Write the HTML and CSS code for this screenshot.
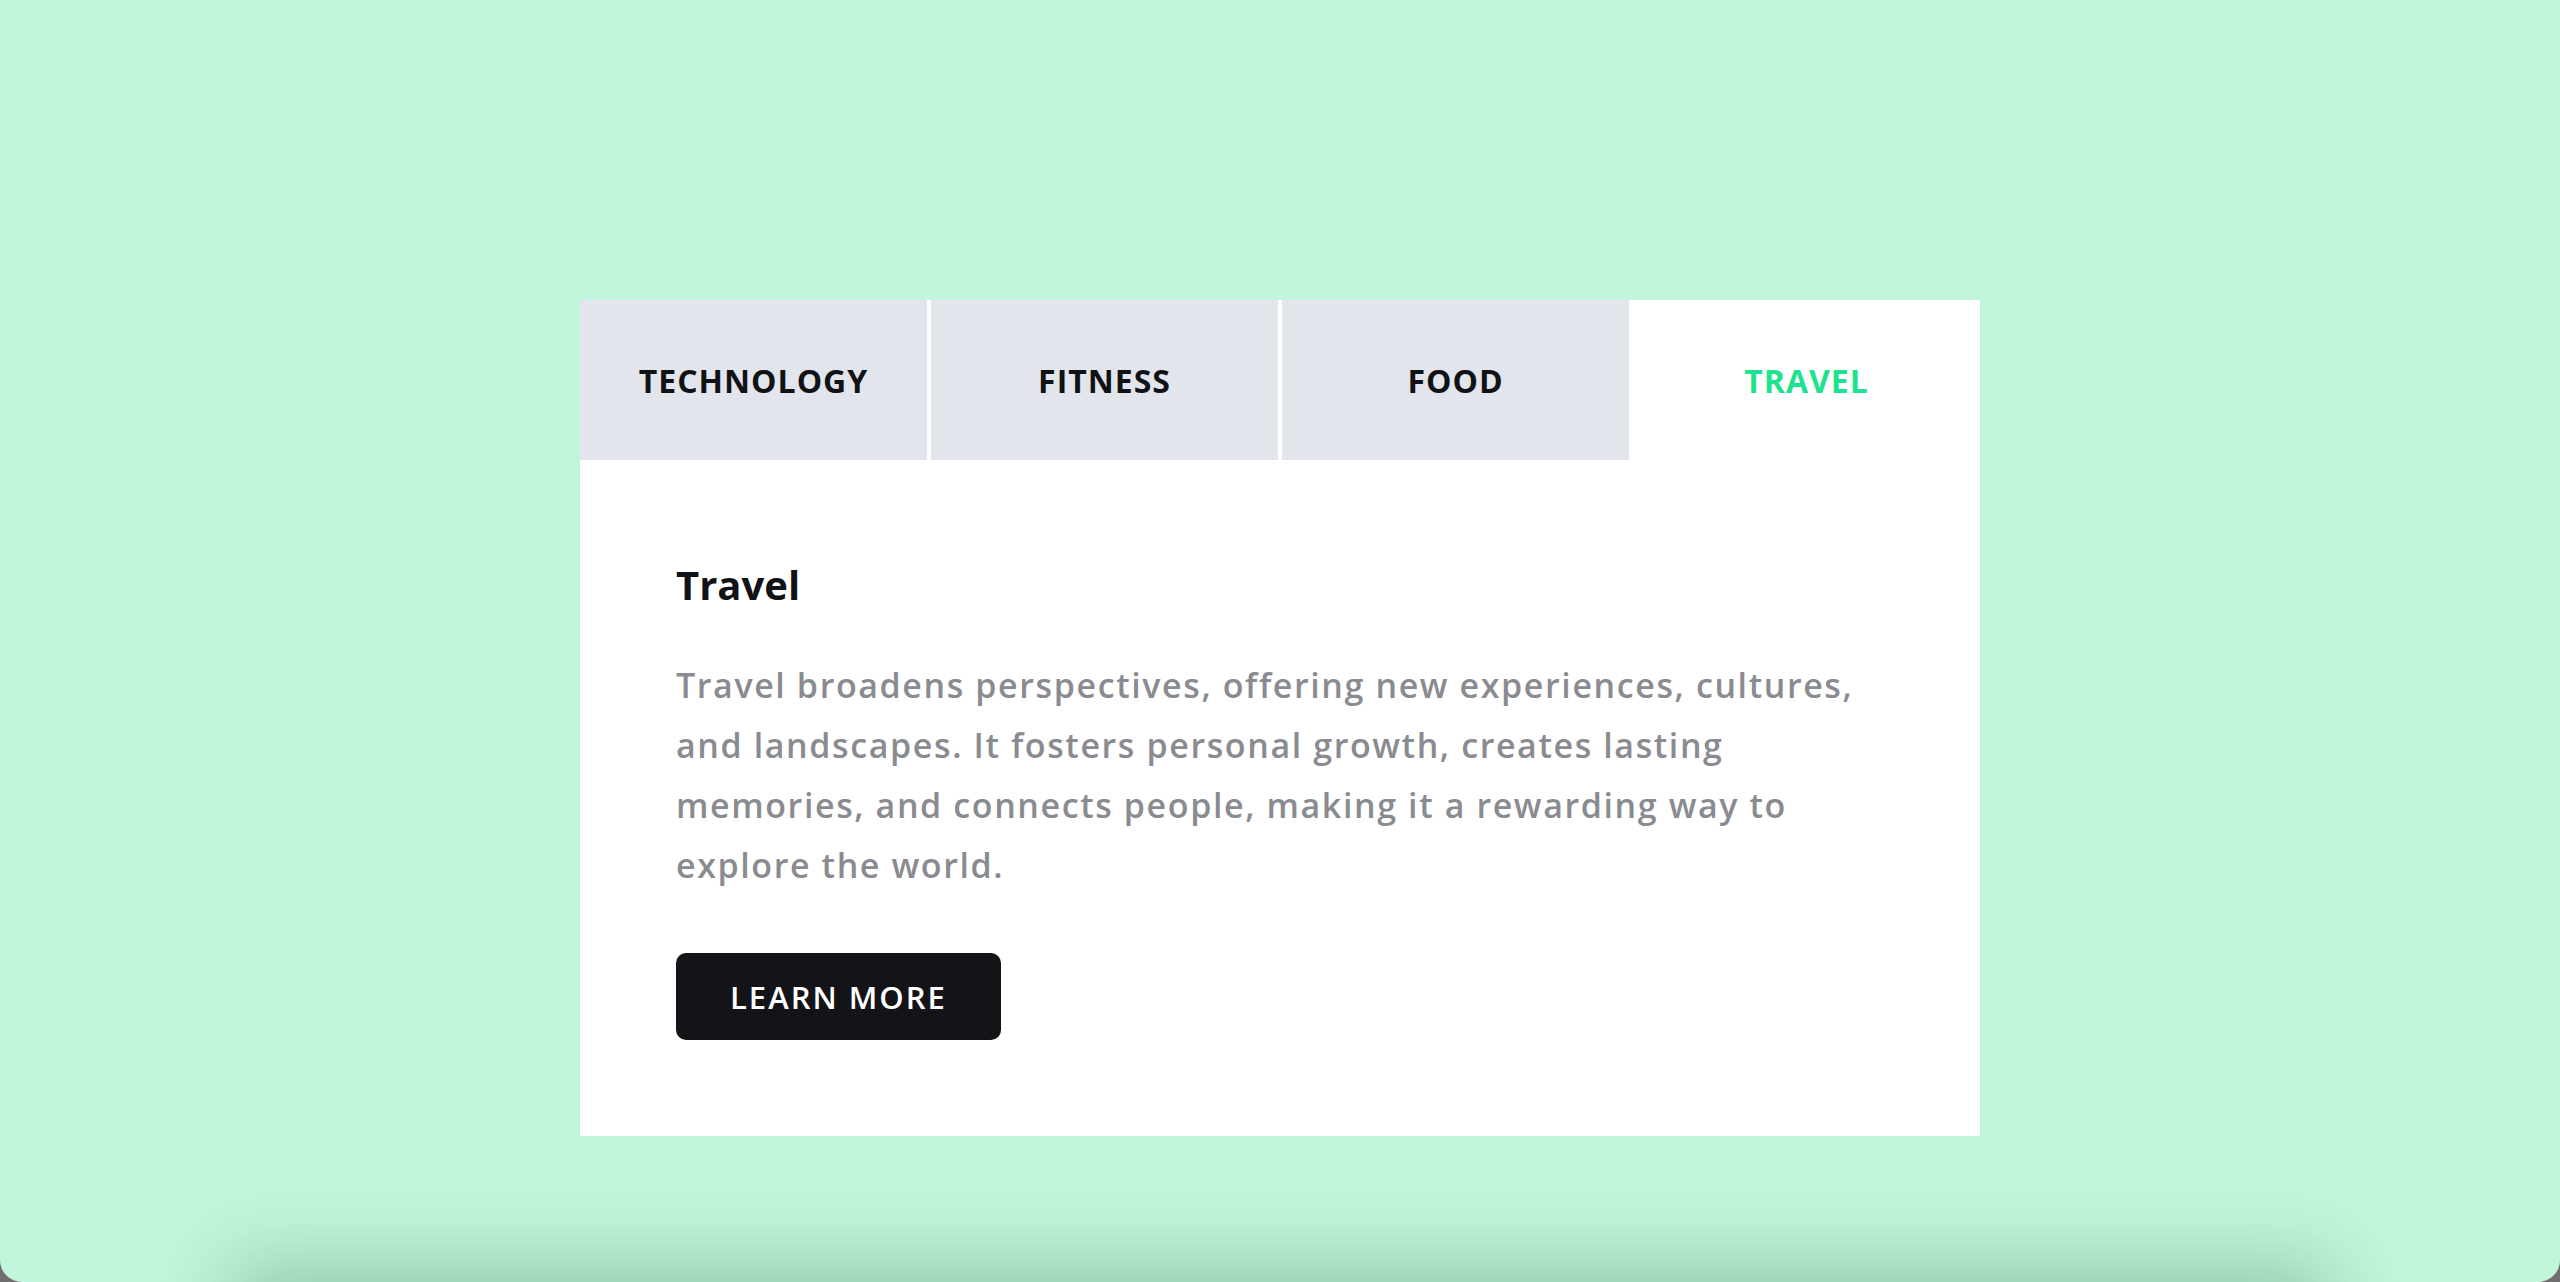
FILE: index.html
```html
<!DOCTYPE html>
<html lang="en">
<head>
<meta charset="utf-8">
<title>Tabs</title>
<link rel="stylesheet" href="styles.css">
</head>
<body>
<div class="screen">
  <div class="card">
    <div class="tabs">
      <div class="tab">TECHNOLOGY</div>
      <div class="tab">FITNESS</div>
      <div class="tab">FOOD</div>
      <div class="tab active">TRAVEL</div>
    </div>
    <div class="content">
      <h2 class="title">Travel</h2>
      <p class="text">Travel broadens perspectives, offering new experiences, cultures, and landscapes. It fosters personal growth, creates lasting memories, and connects people, making it a rewarding way to explore the world.</p>
      <button class="btn">LEARN MORE</button>
    </div>
  </div>
  <div class="shade"></div>
</div>
</body>
</html>
```
FILE: styles.css
```css
html, body {
  margin: 0;
  padding: 0;
  background: #6f6f6f;
}
.screen {
  position: relative;
  width: 2560px;
  height: 1282px;
  background: #c1f5dc;
  border-radius: 0 0 22px 22px;
  overflow: hidden;
  display: flex;
  justify-content: center;
  align-items: flex-start;
  padding-top: 300px;
  box-sizing: border-box;
  font-family: "Open Sans", "Liberation Sans", sans-serif;
}
.card {
  width: 1400px;
  background: #ffffff;
}
.tabs {
  display: flex;
  height: 160px;
}
.tab {
  flex: 1;
  display: flex;
  align-items: center;
  justify-content: center;
  background: #e2e5eb;
  border-right: 4px solid #ffffff;
  font-size: 32px;
  font-weight: 700;
  letter-spacing: 1px;
  color: #111216;
}
.tab.active {
  background: #ffffff;
  color: #1fe28e;
  border-right: none;
}
.content {
  padding: 101px 96px 96px 96px;
}
.title {
  margin: 0;
  font-size: 40px;
  line-height: 48px;
  font-weight: 700;
  color: #111216;
}
.text {
  margin: 46px 0 0 0;
  font-size: 34px;
  line-height: 60px;
  font-weight: 600;
  letter-spacing: 1.6px;
  color: #8a8b91;
}
.btn {
  display: block;
  margin-top: 58px;
  height: 87px;
  padding: 0 54px;
  background: #131318;
  color: #ffffff;
  border: none;
  border-radius: 10px;
  font-family: "Open Sans", "Liberation Sans", sans-serif;
  font-size: 31px;
  font-weight: 600;
  letter-spacing: 2px;
}
.shade {
  position: absolute;
  left: 270px;
  right: 270px;
  top: 1305px;
  height: 200px;
  background: rgba(40, 100, 70, 0.38);
  box-shadow: 0 0 70px 40px rgba(40, 100, 70, 0.3);
}
```
